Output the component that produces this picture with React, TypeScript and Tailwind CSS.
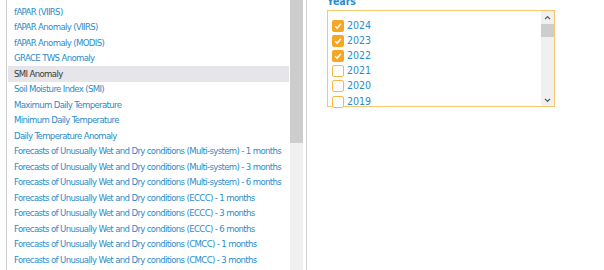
const layers = [
  "fAPAR (VIIRS)",
  "fAPAR Anomaly (VIIRS)",
  "fAPAR Anomaly (MODIS)",
  "GRACE TWS Anomaly",
  "SMI Anomaly",
  "Soil Moisture Index (SMI)",
  "Maximum Daily Temperature",
  "Minimum Daily Temperature",
  "Daily Temperature Anomaly",
  "Forecasts of Unusually Wet and Dry conditions (Multi-system) - 1 months",
  "Forecasts of Unusually Wet and Dry conditions (Multi-system) - 3 months",
  "Forecasts of Unusually Wet and Dry conditions (Multi-system) - 6 months",
  "Forecasts of Unusually Wet and Dry conditions (ECCC) - 1 months",
  "Forecasts of Unusually Wet and Dry conditions (ECCC) - 3 months",
  "Forecasts of Unusually Wet and Dry conditions (ECCC) - 6 months",
  "Forecasts of Unusually Wet and Dry conditions (CMCC) - 1 months",
  "Forecasts of Unusually Wet and Dry conditions (CMCC) - 3 months",
];

const years = [
  { y: "2024", on: true },
  { y: "2023", on: true },
  { y: "2022", on: true },
  { y: "2021", on: false },
  { y: "2020", on: false },
  { y: "2019", on: false },
];

const font = { fontFamily: '"DejaVu Sans Condensed", "DejaVu Sans", sans-serif' };

const Check = ({ on }: { on: boolean }) => (
  <span
    className={
      on
        ? "flex h-[12px] w-[12px] items-center justify-center rounded-[2px] bg-[#f6a623]"
        : "h-[12px] w-[12px] rounded-[2px] border border-[#f6b84a] bg-white"
    }
  >
    {on && (
      <svg viewBox="0 0 12 12" className="h-[10px] w-[10px]">
        <path d="M2.5 6.2 L5 8.6 L9.5 3.2" fill="none" stroke="white" strokeWidth="1.8" />
      </svg>
    )}
  </span>
);

const App = () => {
  return (
    <div className="flex h-[270px] w-[604px] overflow-hidden bg-white" style={font}>
      <div className="ml-[6px] flex h-full w-[301px] border-x border-[#cfcfcf]">
        <ul className="flex-1 overflow-hidden px-[1px] pt-[4px] text-[9.5px] tracking-[-0.63px]">
          {layers.map((l) => (
            <li
              key={l}
              className={
                l === "SMI Anomaly"
                  ? "flex h-[15.5px] items-center whitespace-nowrap bg-[#e5e5ea] pl-[6px] text-[#3a3a3a]"
                  : "flex h-[15.5px] items-center whitespace-nowrap pl-[6px] text-[#2a8ccc]"
              }
            >
              {l}
            </li>
          ))}
        </ul>
        <div className="flex w-[13px] flex-col bg-[#f0f0f0]">
          <div className="h-[143px] bg-[#cdcdcd]" />
        </div>
        <div className="w-[3px]" />
      </div>

      <div className="pl-[20px]">
        <div className="-mt-[6px] h-[16px] text-[10.5px] font-bold text-[#2a8ccc]">Years</div>
        <div className="flex h-[97px] w-[228px] border border-[#f8c76e]">
          <div className="flex-1 pl-[4px] pt-[7px]">
            {years.map((y) => (
              <div key={y.y} className="flex h-[15.2px] items-center gap-[3px] text-[10.5px] text-[#2a8ccc]">
                <Check on={y.on} />
                <span>{y.y}</span>
              </div>
            ))}
          </div>
          <div className="flex w-[13px] flex-col bg-[#f0f0f0]">
            <div className="flex h-[13px] items-center justify-center">
              <svg viewBox="0 0 8 6" className="h-[5px] w-[7px]">
                <path d="M1 5 L4 2 L7 5" fill="none" stroke="#555" strokeWidth="1.5" />
              </svg>
            </div>
            <div className="h-[13px] bg-[#cdcdcd]" />
            <div className="flex-1" />
            <div className="flex h-[12px] items-center justify-center">
              <svg viewBox="0 0 8 6" className="h-[5px] w-[7px]">
                <path d="M1 1 L4 4 L7 1" fill="none" stroke="#555" strokeWidth="1.5" />
              </svg>
            </div>
          </div>
        </div>
      </div>
    </div>
  );
};

export default App;
